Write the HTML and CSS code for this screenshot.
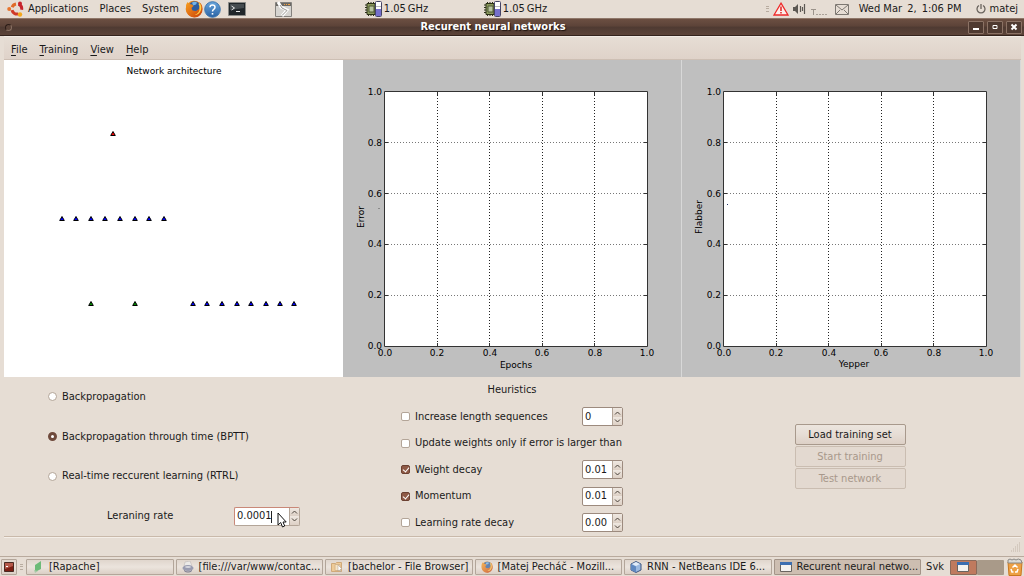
FILE: index.html
```html
<!DOCTYPE html>
<html lang="en">
    <head>
        <meta charset="utf-8">
        <title>Recurent neural networks</title>
        <link rel="stylesheet" href="styles.css">
    </head>
    <body>
        <svg class="defs" aria-hidden="true">
            <defs>
                <linearGradient id="fox" x1="0" y1="0" x2="1" y2="1">
                    <stop offset="0" stop-color="#f8a020"/>
                    <stop offset="1" stop-color="#c83c08"/>
                </linearGradient>
                <linearGradient id="blue" x1="0" y1="0" x2="0" y2="1">
                    <stop offset="0" stop-color="#6aa6dc"/>
                    <stop offset="1" stop-color="#2a62a4"/>
                </linearGradient>
                <symbol id="firefox" viewBox="0 0 18 18">
                    <circle cx="9" cy="9" r="8.3" fill="url(#fox)"/>
                    <circle cx="9.6" cy="7" r="5.8" fill="#2d5c9e"/>
                    <path d="M7 2.5q3-1.500 5 0l-1 2-3 1z" fill="#73b4e8"/>
                    <path d="M1 5l1.500-3 1.500 2 3 .5 1.500 1.500-2 2 1 2.500 3.500.5 3-2 1-4-1-3q3.500 2 3.500 7a8 8 0 0 1-16 1z" fill="url(#fox)"/>
                    <path d="M14.500 3q2.500 3 1.500 7-1.500 5-6.500 5 5-2 5-6 .5-3-1-5z" fill="#ffd24a"/>
                </symbol>
                <symbol id="cpu" viewBox="0 0 18 16">
                    <path d="M3 2.500h8v11H3z" fill="#8b9a5c" stroke="#2c3018"/>
                    <path d="M1 4h2M1 6.500h2M1 9h2M1 11.500h2M4.500 1v2M7 1v2M9.500 1v2M4.500 13v2M7 13v2M9.500 13v2" stroke="#2c3018"/>
                    <path d="M5 5h5v6H5z" fill="#b9c4a0" stroke="#4e5934"/>
                    <rect x="11.500" y=".5" width="6" height="15" rx="1" fill="#fff" stroke="#444466"/>
                    <path d="M12 8h5v7h-5z" fill="#7670cc"/>
                    <path d="M12 5.500h5" stroke="#bbb"/>
                </symbol>
                <symbol id="win" viewBox="0 0 12 10">
                    <path d="M.5.5h11v9H.5z" fill="#f4f2ef" stroke="#69645f"/>
                    <path d="M0 0h12v3H0z" fill="#3c6eb0"/>
                </symbol>
                <symbol id="up" viewBox="0 0 7 4"><path d="M1 3.500L3.500 1 6 3.500" fill="none" stroke="#4a423b"/></symbol>
                <symbol id="down" viewBox="0 0 7 4"><path d="M1 .5L3.500 3 6 .5" fill="none" stroke="#4a423b"/></symbol>
                <path id="unit" d="M0-2.500L2.300 1.500h-4.600z" stroke="#000"/>
                <g id="axes">
                    <path d="M41.500 31.500h263v255h-263z" fill="#fff" stroke="#333"/>
                    <path class="grid" d="M94.500 32v254M146.500 32v254M199.500 32v254M251.500 32v254"/>
                    <path class="grid soft" d="M42 82.500h262M42 133.500h262M42 184.500h262M42 235.500h262"/>
                    <path d="M94.500 32v3m0 248v3M146.500 32v3m0 248v3M199.500 32v3m0 248v3M251.500 32v3m0 248v3M42 82.500h3m256 0h3M42 133.500h3m256 0h3M42 184.500h3m256 0h3M42 235.500h3m256 0h3" stroke="#333"/>
                </g>
            </defs>
        </svg>

        <!-- top panel -->
        <div class="panel">
            <svg class="ubuntu" width="17" height="16" viewBox="0 0 17 16" aria-hidden="true">
                <g fill="none" stroke-width="3">
                    <path d="M5.200 6.200A5 5 0 0 1 9 3" stroke="#e06a28"/>
                    <path d="M11.500 3.200A5 5 0 0 1 14.600 8.800" stroke="#c6242c"/>
                    <path d="M5 9.200A5 5 0 0 0 11.500 12.800" stroke="#d03a28"/>
                </g>
                <circle cx="2.200" cy="8" r="2" fill="#e8742c"/>
                <circle cx="13" cy="2.500" r="2" fill="#c6242c"/>
                <circle cx="13" cy="13.500" r="2.200" fill="#f4a81c"/>
            </svg>
            <a href="#">Applications</a>
            <a href="#">Places</a>
            <a href="#">System</a>
            <svg class="launch" width="18" height="18" aria-hidden="true"><use href="#firefox"/></svg>
            <svg width="17" height="17" viewBox="0 0 17 17" aria-hidden="true">
                <circle cx="8.500" cy="8.500" r="7.800" fill="url(#blue)" stroke="#3f76ae"/>
                <path d="M6 6.200Q6 4 8.500 4T11 6.200Q11 7.500 9.700 8.300T8.500 10.500" fill="none" stroke="#fff" stroke-width="1.500"/>
                <path d="M7.700 12h1.600v1.600H7.700z" fill="#fff"/>
            </svg>
            <svg class="term" width="18" height="16" viewBox="0 0 18 16" aria-hidden="true">
                <path d="M.5 1.500h17v13H.5z" fill="#20262a" stroke="#8b8b88"/>
                <path d="M2 3h14v4L2 9z" fill="#454c50"/>
                <path d="M3.500 5l3 2-3 2M8 10.500h4" fill="none" stroke="#e8e8e8"/>
            </svg>
            <svg class="broken" width="17" height="17" viewBox="0 0 17 17" aria-hidden="true">
                <path d="M.5 1.500h16v14H.5z" fill="#d6d4d0" stroke="#85827e"/>
                <path d="M1 2h15v3H1z" fill="#6b6864"/>
                <path d="M9 3.500h1m1 0h1m1 0h2" stroke="#f0a040"/>
                <path d="M3 1l3 5 6 3-5 6" fill="none" stroke="#fff" stroke-width="3"/>
                <path d="M5 4l2 3 5 2.500-5 5" fill="none" stroke="#98958f"/>
            </svg>
            <div class="cpu first"><svg width="18" height="16" aria-hidden="true"><use href="#cpu"/></svg>1.05&thinsp;GHz</div>
            <div class="cpu"><svg width="18" height="16" aria-hidden="true"><use href="#cpu"/></svg>1.05&thinsp;GHz</div>
            <div class="tray">
                <svg width="3" height="8" viewBox="0 0 3 8" aria-hidden="true"><path d="M0 1.500h3M0 3.500h3M0 6.500h3" stroke="#b8aca0"/></svg>
                <svg width="16" height="14" viewBox="0 0 16 14" aria-hidden="true">
                    <path d="M8 1.200L15 13H1z" fill="#fdeeea" stroke="#ee2a2a" stroke-width="1.300"/>
                    <path d="M8 4.500v4.500M8 10v1.500" stroke="#e02020" stroke-width="1.500"/>
                </svg>
                <svg width="13" height="12" viewBox="0 0 13 12" aria-hidden="true">
                    <path d="M0 4h2l3-3v10L2 8H0z" fill="#5c5853"/>
                    <path d="M7.500 3v6M9.500 4v4M11.500 1v10" stroke="#5c5853" stroke-width="1.200"/>
                </svg>
                <svg width="17" height="12" viewBox="0 0 17 12" aria-hidden="true">
                    <path d="M1 6.500h5M3.500 6v6" stroke="#9b938b"/>
                    <path d="M6 11.500h2m1 0h2m1 0h2m1 0h2" stroke="#aaa198"/>
                </svg>
                <svg class="mail" width="14" height="11" viewBox="0 0 14 11" aria-hidden="true">
                    <path d="M.5.5h13v10H.5zM1 1l6 5 6-5M1 10l4-4M13 10L9 6" fill="none" stroke="#7d7872"/>
                </svg>
                <span class="clock">Wed Mar&thinsp; 2,&thinsp; 1:06 PM</span>
                <svg class="power" width="10" height="10" viewBox="0 0 10 10" aria-hidden="true">
                    <path d="M3 1.500a4 4 0 1 0 4 0M5 0v5" fill="none" stroke="#6a645e" stroke-width="1.300"/>
                </svg>
                <a href="#">matej</a>
            </div>
        </div>

        <div class="titlebar">
            <button class="dot" aria-label="Window menu"></button>
            <h1>Recurent neural networks</h1>
            <div class="winbtns">
                <button aria-label="Minimize"><svg width="8" height="8" viewBox="0 0 8 8"><path d="M1 6h6" stroke="#fff" stroke-width="2"/></svg></button>
                <button aria-label="Maximize"><svg width="8" height="8" viewBox="0 0 8 8"><path d="M2 2.500h4v3H2z" fill="none" stroke="#fff"/></svg></button>
                <button aria-label="Close"><svg width="8" height="8" viewBox="0 0 8 8"><path d="M1.500 1.500l5 5m0-5l-5 5" stroke="#fff" stroke-width="2"/></svg></button>
            </div>
        </div>

        <div class="window">
            <div class="menu">
                <a href="#"><u>F</u>ile</a>
                <a href="#"><u>T</u>raining</a>
                <a href="#"><u>V</u>iew</a>
                <a href="#"><u>H</u>elp</a>
            </div>

            <div class="plots">
                <svg class="plot net" viewBox="0 0 339 317" role="img" aria-label="Network architecture">
                    <text class="title" x="170" y="14">Network architecture</text>
                    <use href="#unit" x="109" y="74" fill="#f00"/>
                    <g fill="#00f">
                        <use href="#unit" x="58" y="159"/>
                        <use href="#unit" x="72" y="159"/>
                        <use href="#unit" x="87" y="159"/>
                        <use href="#unit" x="101" y="159"/>
                        <use href="#unit" x="116" y="159"/>
                        <use href="#unit" x="131" y="159"/>
                        <use href="#unit" x="145" y="159"/>
                        <use href="#unit" x="160" y="159"/>
                        <use href="#unit" x="189" y="244"/>
                        <use href="#unit" x="203" y="244"/>
                        <use href="#unit" x="218" y="244"/>
                        <use href="#unit" x="233" y="244"/>
                        <use href="#unit" x="247" y="244"/>
                        <use href="#unit" x="262" y="244"/>
                        <use href="#unit" x="276" y="244"/>
                        <use href="#unit" x="290" y="244"/>
                    </g>
                    <g fill="#080">
                        <use href="#unit" x="87" y="244"/>
                        <use href="#unit" x="131" y="244"/>
                    </g>
                </svg>
                <svg class="plot" viewBox="0 0 339 317" role="img" aria-label="Error by epochs">
                    <use href="#axes"/>
                    <path d="M35 148.500h2" stroke="#8a8a8a"/>
                    <g class="ylabels">
                        <text x="39" y="35">1.0</text>
                        <text x="39" y="86">0.8</text>
                        <text x="39" y="137">0.6</text>
                        <text x="39" y="187">0.4</text>
                        <text x="39" y="238">0.2</text>
                        <text x="39" y="289">0.0</text>
                    </g>
                    <g class="xlabels">
                        <text x="42" y="296">0.0</text>
                        <text x="94" y="296">0.2</text>
                        <text x="147" y="296">0.4</text>
                        <text x="199" y="296">0.6</text>
                        <text x="252" y="296">0.8</text>
                        <text x="304" y="296">1.0</text>
                        <text x="173" y="308">Epochs</text>
                        <text transform="translate(21 157) rotate(-90)">Error</text>
                    </g>
                </svg>
                <svg class="plot" viewBox="0 0 339 317" role="img" aria-label="Flabber by yepper">
                    <use href="#axes"/>
                    <path d="M45 144.500h1" stroke="#236"/>
                    <g class="ylabels">
                        <text x="39" y="35">1.0</text>
                        <text x="39" y="86">0.8</text>
                        <text x="39" y="137">0.6</text>
                        <text x="39" y="187">0.4</text>
                        <text x="39" y="238">0.2</text>
                        <text x="39" y="289">0.0</text>
                    </g>
                    <g class="xlabels">
                        <text x="42" y="296">0.0</text>
                        <text x="94" y="296">0.2</text>
                        <text x="147" y="296">0.4</text>
                        <text x="199" y="296">0.6</text>
                        <text x="252" y="296">0.8</text>
                        <text x="304" y="296">1.0</text>
                        <text x="172" y="307">Yepper</text>
                        <text transform="translate(20 157) rotate(-90)">Flabber</text>
                    </g>
                </svg>
            </div>

            <form class="controls">
                <div class="algo">
                    <label><input type="radio" name="algo">Backpropagation</label>
                    <label><input type="radio" name="algo" checked>Backpropagation through time (BPTT)</label>
                    <label><input type="radio" name="algo">Real-time reccurent learning (RTRL)</label>
                    <div class="rate">
                        <label for="rate">Leraning rate</label>
                        <div class="spin active">
                            <input id="rate" type="text" value="0.0001">
                            <div class="arrows">
                                <button type="button" aria-label="Increase"><svg width="7" height="4"><use href="#up"/></svg></button>
                                <button type="button" aria-label="Decrease"><svg width="7" height="4"><use href="#down"/></svg></button>
                            </div>
                            <i class="caret"></i>
                            <svg class="pointer" width="10" height="16" viewBox="0 0 10 16" aria-hidden="true">
                                <path d="M1 1v12l2.700-2.500L5.500 15l2.200-1L6 10h3.200z" fill="#fff" stroke="#111"/>
                            </svg>
                        </div>
                    </div>
                </div>

                <div class="heur">
                    <h2>Heuristics</h2>
                    <div class="row">
                        <label for="c1"><input id="c1" type="checkbox">Increase length sequences</label>
                        <div class="spin">
                            <input type="text" value="0" aria-label="Sequence length">
                            <div class="arrows">
                                <button type="button" aria-label="Increase"><svg width="7" height="4"><use href="#up"/></svg></button>
                                <button type="button" aria-label="Decrease"><svg width="7" height="4"><use href="#down"/></svg></button>
                            </div>
                        </div>
                    </div>
                    <div class="row">
                        <label for="c2"><input id="c2" type="checkbox">Update weights only if error is larger than</label>
                    </div>
                    <div class="row">
                        <label for="c3"><input id="c3" type="checkbox" checked>Weight decay</label>
                        <div class="spin">
                            <input type="text" value="0.01" aria-label="Weight decay value">
                            <div class="arrows">
                                <button type="button" aria-label="Increase"><svg width="7" height="4"><use href="#up"/></svg></button>
                                <button type="button" aria-label="Decrease"><svg width="7" height="4"><use href="#down"/></svg></button>
                            </div>
                        </div>
                    </div>
                    <div class="row">
                        <label for="c4"><input id="c4" type="checkbox" checked>Momentum</label>
                        <div class="spin">
                            <input type="text" value="0.01" aria-label="Momentum value">
                            <div class="arrows">
                                <button type="button" aria-label="Increase"><svg width="7" height="4"><use href="#up"/></svg></button>
                                <button type="button" aria-label="Decrease"><svg width="7" height="4"><use href="#down"/></svg></button>
                            </div>
                        </div>
                    </div>
                    <div class="row">
                        <label for="c5"><input id="c5" type="checkbox">Learning rate decay</label>
                        <div class="spin">
                            <input type="text" value="0.00" aria-label="Learning rate decay value">
                            <div class="arrows">
                                <button type="button" aria-label="Increase"><svg width="7" height="4"><use href="#up"/></svg></button>
                                <button type="button" aria-label="Decrease"><svg width="7" height="4"><use href="#down"/></svg></button>
                            </div>
                        </div>
                    </div>
                </div>

                <div class="actions">
                    <button type="button">Load training set</button>
                    <button type="button" disabled>Start training</button>
                    <button type="button" disabled>Test network</button>
                </div>
            </form>

            <div class="status">
                <svg width="10" height="10" viewBox="0 0 10 10" aria-hidden="true">
                    <path d="M8 1h1M6 3h1m1 0h1M4 5h1m1 0h1m1 0h1M2 7h1m1 0h1m1 0h1m1 0h1M0 9h1m1 0h1m1 0h1m1 0h1m1 0h1" stroke="#c2b5a8"/>
                </svg>
            </div>
        </div>

        <!-- bottom panel -->
        <div class="taskbar">
            <button class="desk" aria-label="Show desktop">
                <svg width="10" height="10" viewBox="0 0 10 10"><path d="M.5.500h9v9h-9z" fill="#7c1f14" stroke="#4a2a22"/><path d="M1 1h8v3L1 7z" fill="#b5594a"/><path d="M2 4.500h2" stroke="#fff"/></svg>
            </button>
            <svg class="grip" width="3" height="8" viewBox="0 0 3 8" aria-hidden="true"><path d="M0 1.500h3M0 3.500h3M0 6.500h3" stroke="#b8aca0"/></svg>
            <button class="task">
                <svg width="12" height="12" viewBox="0 0 12 12"><path d="M3 4l6-4v8l-6 3z" fill="#6dbb78"/><path d="M2 9l4 1-3 2z" fill="#a9c9a8"/></svg>
                <span>[Rapache]</span>
            </button>
            <button class="task">
                <svg width="12" height="12" viewBox="0 0 12 12"><path d="M3 1l5-1 2 5H2z" fill="#eceae8" stroke="#b5b0b0" stroke-width=".5"/><ellipse cx="6" cy="7" rx="5.500" ry="3" fill="#9a9cb0"/><ellipse cx="6" cy="6" rx="3" ry="1" fill="#d5d6de"/><path d="M2 9q4 3 8 0v1q-4 3-8 0z" fill="#73758c"/></svg>
                <span>[file:///var/www/contac...</span>
            </button>
            <button class="task">
                <svg width="12" height="12" viewBox="0 0 12 12"><path d="M.5 2.500h4l1-1h5v9H.5z" fill="#eecb98" stroke="#cfa97a"/><path d="M4 3.500h5v6H4z" fill="#f6e4c6" stroke="#d6b58a"/><path d="M7 4l4 4-2 .5 1 2.500-2-2-1 1z" fill="#fff" stroke="#a89a8a" stroke-width=".5"/></svg>
                <span>[bachelor - File Browser]</span>
            </button>
            <button class="task faded">
                <svg width="12" height="12"><use href="#firefox"/></svg>
                <span>[Matej Pecháč - Mozill...</span>
            </button>
            <button class="task">
                <svg width="12" height="12" viewBox="0 0 12 12"><path d="M6 .5l5 2.500v6l-5 2.500L1 9V3z" fill="#9bb9e0" stroke="#3c5680"/><path d="M1 3l5 2.500v6L1 9z" fill="#5f88c0"/><path d="M6 1l4 2-4 2-4-2z" fill="#e2ecf8"/></svg>
                <span>RNN - NetBeans IDE 6...</span>
            </button>
            <button class="task current">
                <svg width="12" height="10"><use href="#win"/></svg>
                <span>Recurent neural netwo...</span>
            </button>
            <span class="lang">Svk</span>
            <div class="pager">
                <button class="on" aria-label="Workspace 1"><svg width="12" height="10"><use href="#win"/></svg></button>
                <button aria-label="Workspace 2"></button>
            </div>
            <svg class="trash" width="16" height="18" viewBox="0 0 16 18" aria-hidden="true">
                <path d="M1 4h14l-1 13.500H2z" fill="#eda045" stroke="#c87820"/>
                <path d="M1 2q2-2 4 0 2-2 4 0 2-2 5 0l1 3H1z" fill="#d9d9d6" stroke="#8a8884"/>
                <path d="M5.500 9.500L8 7l2.500 2.500M11 11l-1 3H8M6.500 14H5l-1-3" fill="none" stroke="#fff" stroke-width="1.500"/>
            </svg>
        </div>
    </body>
</html>
```
FILE: styles.css
```css
*{
    box-sizing: border-box;
}
body{
    margin: 0;
    min-height: 100vh;
    display: flex;
    flex-direction: column;
    background: #e6ddd4;
    color: #1a1a1a;
    font-family: "DejaVu Sans Condensed", "DejaVu Sans", sans-serif;
    font-size: 11px;
    line-height: 14px;
}
button, input{
    font: inherit;
    color: inherit;
    margin: 0;
    padding: 0;
}
a{
    color: inherit;
    text-decoration: none;
}
h1, h2{
    margin: 0;
    font-size: 11px;
}
svg{
    flex: none;
    display: block;
}
.defs{
    position: absolute;
    width: 0;
    height: 0;
}

/* top panel */
.panel{
    display: flex;
    align-items: center;
    height: 18px;
    padding: 0 6px 0 7px;
    white-space: nowrap;
}
.panel > a{
    margin-right: 11px;
}
.ubuntu{
    margin-right: 4px;
}
.launch{
    margin: 0 1px 0 -5px;
}
.term{
    margin: 0 29px 0 7px;
}
.cpu{
    display: flex;
    align-items: center;
    gap: 2px;
    width: 119px;
}
.cpu.first{
    margin-left: 72px;
}
.tray{
    display: flex;
    align-items: center;
    gap: 4px;
    margin-left: auto;
}
.mail{
    margin: 0 6px 0 4px;
}
.power{
    margin-left: 10px;
}

/* window frame */
.titlebar{
    display: flex;
    align-items: center;
    height: 18px;
    padding: 0 2px 0 5px;
    border-top: 1px solid #8f7769;
    border-bottom: 1px solid #33231c;
    background: linear-gradient(#6c4f42, #5c4338 45%, #4e3a32 50%, #5b4338);
    color: #fff;
}
.titlebar h1{
    flex: 1;
    padding-left: 6px;
    text-align: center;
    text-shadow: 1px 1px 1px #1d120d;
}
.dot{
    width: 7px;
    height: 7px;
    border: 1px solid #8a7163;
    border-top-color: #2c1d17;
    border-left-color: #2c1d17;
    border-radius: 50%;
    background: #5a4237;
}
.winbtns{
    display: flex;
    gap: 3px;
}
.winbtns button{
    display: flex;
    align-items: center;
    justify-content: center;
    width: 16px;
    height: 13px;
    border: 1px solid #8b7265;
    border-radius: 1px;
    background: #4f3a31;
}
.window{
    flex: 1;
    display: flex;
    flex-direction: column;
    padding: 0 3px 0 4px;
}
.menu{
    display: flex;
    gap: 12px;
    height: 24px;
    padding: 6px 7px 0;
    border-top: 1px solid #f2ece6;
    border-bottom: 1px solid #cdbfb4;
    background: linear-gradient(#e6ddd4, #dfd2c9);
}
.menu u{
    text-underline-offset: 2px;
}

/* plots */
.plots{
    display: grid;
    grid-template-columns: repeat(3, 1fr);
}
.plot{
    width: 100%;
    background: #bfbfbf;
    font-family: "DejaVu Sans", sans-serif;
    font-size: 9px;
    box-shadow: inset -1px 0 #d8d8d8;
}
.net{
    background: #fff;
    box-shadow: none;
}
.title, .xlabels{
    text-anchor: middle;
}
.ylabels{
    text-anchor: end;
}
.grid{
    stroke: #222;
    stroke-dasharray: 1 2;
}
.soft{
    stroke: #777;
}

/* controls */
.controls{
    flex: 1;
    display: grid;
    grid-template-columns: repeat(3, 1fr);
    border-bottom: 1px solid #c9b9aa;
}
.algo{
    display: grid;
    grid-template-rows: repeat(4, 1fr);
    align-items: center;
    padding-left: 44px;
}
label{
    display: flex;
    align-items: center;
    gap: 5px;
}
input[type=radio], input[type=checkbox]{
    appearance: none;
    width: 9px;
    height: 9px;
    border: 1px solid #b3a598;
    border-radius: 2px;
    background: #fff;
}
input[type=radio]{
    border-radius: 50%;
}
input[type=radio]:checked{
    border: 3px solid #6f4a3c;
}
input[type=checkbox]:checked{
    border-color: #6b4132;
    background: #8f5a46;
    position: relative;
}
input[type=checkbox]:checked::after{
    content: "";
    position: absolute;
    left: 2px;
    top: 0;
    width: 3px;
    height: 5px;
    border: solid #fff;
    border-width: 0 1px 1px 0;
    transform: rotate(40deg);
}
.rate{
    display: flex;
    align-items: center;
    justify-content: space-between;
    padding: 0 43px 0 59px;
}
.spin{
    position: relative;
    display: flex;
    width: 41px;
    height: 19px;
    border: 1px solid #9c8a7e;
    border-radius: 2px;
    background: #fff;
}
.spin input{
    flex: 1;
    min-width: 0;
    padding: 0 2px;
    border: none;
    outline: none;
    background: none;
}
.spin.active{
    width: 66px;
    border-color: #c98878 #b3a598 #b3a598 #c98878;
}
.arrows{
    display: flex;
    flex-direction: column;
    width: 10px;
    border-left: 1px solid #b3a598;
    background: #e4dad1;
}
.arrows button{
    flex: 1;
    display: flex;
    align-items: center;
    justify-content: center;
    border: none;
    background: linear-gradient(#efe8e1, #ddd0c5);
}
.caret{
    position: absolute;
    left: 36px;
    top: 3px;
    width: 1px;
    height: 12px;
    background: #222;
}
.pointer{
    position: absolute;
    left: 42px;
    top: 4px;
}
.heur{
    display: grid;
    grid-template-rows: repeat(6, 1fr);
    align-items: center;
    padding: 0 59px 0 58px;
}
.heur h2{
    font-weight: normal;
    text-align: center;
}
.row{
    display: flex;
    align-items: center;
    justify-content: space-between;
    white-space: nowrap;
}
.actions{
    display: flex;
    flex-direction: column;
    align-items: center;
    justify-content: center;
    gap: 1px;
    padding-right: 3px;
}
.actions button{
    width: 111px;
    height: 21px;
    border: 1px solid #a8998c;
    border-radius: 2px;
    background: linear-gradient(#ece5de, #e6ddd5 50%, #ddd0c6);
}
.actions button:disabled{
    border-color: #cabdb1;
    background: #e3d9d0;
    color: #a8988b;
}
.status{
    display: flex;
    align-items: center;
    justify-content: flex-end;
    height: 19px;
    border-top: 1px solid #f4eee8;
}

/* bottom panel */
.taskbar{
    display: flex;
    align-items: center;
    height: 20px;
    padding: 1px 1px 0;
    border-top: 1px solid #b9aa9d;
}
.taskbar button{
    display: flex;
    align-items: center;
    border: 1px solid #b3a69a;
    border-radius: 1px;
    background: linear-gradient(#e0d6cd, #ebe4dd 50%, #dbcfc5);
}
.desk{
    justify-content: center;
    width: 16px;
    height: 16px;
}
.grip{
    margin: 0 3px;
}
.task{
    flex: 1;
    gap: 5px;
    min-width: 0;
    height: 16px;
    margin-right: 2px;
    overflow: hidden;
    white-space: nowrap;
}
.taskbar .task{
    padding: 0 5px;
}
.task.faded svg{
    opacity: .7;
}
.taskbar .current{
    background: #cdbeb1;
    border-color: #a39488;
}
.lang{
    margin: 0 6px 0 3px;
}
.pager{
    display: flex;
    margin-right: 3px;
}
.pager button{
    justify-content: center;
    width: 27px;
    height: 15px;
    border: none;
    background: #a99a89;
}
.pager .on{
    background: #bf7a5e;
    border: 1px solid #8a6a5a;
}
```
